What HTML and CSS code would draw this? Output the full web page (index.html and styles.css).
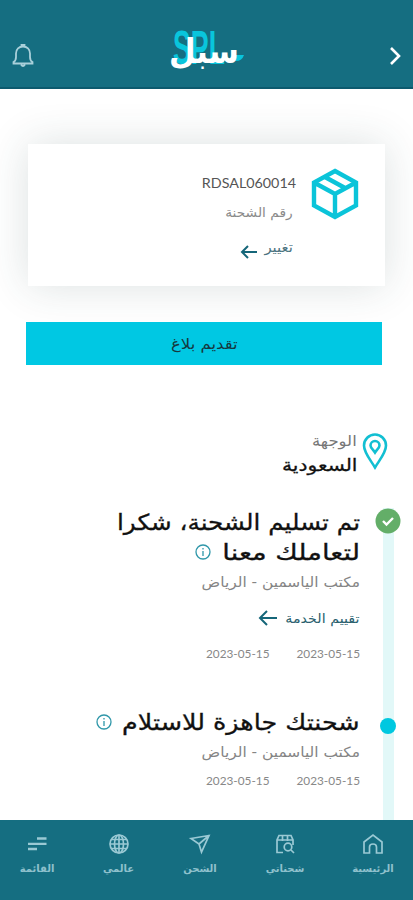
FILE: index.html
```html
<!DOCTYPE html>
<html lang="ar" dir="rtl">
<head>
    <meta charset="UTF-8">
    <meta name="viewport" content="width=device-width, initial-scale=1.0">
    <title>سبل</title>
    <link rel="stylesheet" href="styles.css">
</head>
<body>

    <header class="header">
        <svg class="chevron" width="12" height="20" viewBox="0 0 12 20"><path d="M2 2l8 8-8 8"/></svg>
        <svg class="logo" width="80" height="54" viewBox="0 0 80 54">
            <text class="logo-en" x="1" y="42" textLength="52" lengthAdjust="spacingAndGlyphs">SPL</text>
            <path class="logo-tail" d="M56 39l5-6h11q-2 6-8 6z"/>
            <text class="logo-ar" x="67" y="41" textLength="70" lengthAdjust="spacingAndGlyphs">سبل</text>
        </svg>
        <svg class="bell" width="22" height="24" viewBox="0 0 22 24">
            <path d="M1.500 19.500h19v-1.500c-2-1-2.500-2.500-2.500-5V9.500c0-4.500-3-7-7-7s-7 2.500-7 7V13c0 2.500-.5 4-2.500 5zM9.500 2.500V1h3v1.500M9 20.500q2 3 4 0"/>
        </svg>
    </header>

    <main class="content">
        <section class="card">
            <svg class="box" width="48" height="52" viewBox="0 0 48 52">
                <path d="M24 3l21 11.500v23L24 49 3 37.500v-23zM3 14.500L24 26l21-11.500M24 26v23M13.500 8.700L34.500 20.200"/>
            </svg>
            <div class="card-info">
                <div class="number" dir="ltr">RDSAL060014</div>
                <div class="label"><span class="wide-s">رقم الشحنة</span></div>
                <div class="change">
                    <span class="wide-s">تغيير</span>
                    <svg width="18" height="14" viewBox="0 0 18 14"><path d="M17 7H2M8 1L2 7l6 6"/></svg>
                </div>
            </div>
        </section>

        <button class="report"><span>تقديم بلاغ</span></button>

        <section class="destination">
            <svg width="26" height="38" viewBox="0 0 26 38">
                <path d="M13 35.500C9 28.500 2 21 2 13.500a11 11 0 0 1 22 0C24 21 17 28.500 13 35.500zM13 20.500c-1.500-2.500-4.500-4.500-4.500-7a4.500 4.500 0 0 1 9 0c0 2.500-3 4.500-4.500 7z"/>
            </svg>
            <div>
                <div class="dest-label"><span class="wide-m">الوجهة</span></div>
                <div class="dest-name"><span class="wide-l">السعودية</span></div>
            </div>
        </section>

        <section class="timeline">
            <div class="step step-done">
                <div class="rail">
                    <svg class="check" width="26" height="26" viewBox="0 0 26 26"><circle cx="13" cy="13" r="12.500"/><path d="M8 13l3.500 3.500L18 10"/></svg>
                </div>
                <div class="step-body">
                    <h2><span class="t1">تم تسليم الشحنة، شكرا</span><br><span class="t2">لتعاملك معنا</span>
                        <svg class="info" width="16" height="16" viewBox="0 0 16 16"><circle cx="8" cy="8" r="7"/><path d="M8 7v5M8 4v1.500"/></svg></h2>
                    <p class="place"><span class="wide-m">مكتب الياسمين - الرياض</span></p>
                    <div class="rate">
                        <span class="wide-m">تقييم الخدمة</span>
                        <svg width="20" height="16" viewBox="0 0 20 16"><path d="M19 8H2M9 1L2 8l7 7"/></svg>
                    </div>
                    <div class="dates"><span>2023-05-15</span><span>2023-05-15</span></div>
                </div>
            </div>
            <div class="step step-ready">
                <div class="rail"><i class="dot"></i></div>
                <div class="step-body">
                    <h2><span class="t3">شحنتك جاهزة للاستلام</span>
                        <svg class="info" width="16" height="16" viewBox="0 0 16 16"><circle cx="8" cy="8" r="7"/><path d="M8 7v5M8 4v1.500"/></svg></h2>
                    <p class="place"><span class="wide-m">مكتب الياسمين - الرياض</span></p>
                    <div class="dates"><span>2023-05-15</span><span>2023-05-15</span></div>
                </div>
            </div>
        </section>
    </main>

    <nav class="nav">
        <a class="nav-item">
            <svg width="22" height="22" viewBox="0 0 22 22"><path d="M2 20V9l9-7 9 7v11h-5.500v-6q0-3-3.500-3t-3.500 3v6z"/></svg>
            <span>الرئيسية</span>
        </a>
        <a class="nav-item">
            <svg width="22" height="22" viewBox="0 0 22 22"><path d="M9 19.500H3V7l2-4.500h12L19 7v5M3 7h16M8.500 2.500V8M13.500 2.500V8M17 17l3 3"/><circle cx="14" cy="14" r="3.800"/></svg>
            <span>شحناتي</span>
        </a>
        <a class="nav-item">
            <svg width="22" height="22" viewBox="0 0 22 22"><path d="M2 5.500l18-3L12.500 19l-2.500-8zM10 11l10-8.500"/></svg>
            <span>الشحن</span>
        </a>
        <a class="nav-item">
            <svg width="22" height="22" viewBox="0 0 22 22"><circle cx="11" cy="11" r="9"/><ellipse cx="11" cy="11" rx="4.500" ry="9"/><path d="M11 2v18M2 11h18M3.500 6.500h15M3.500 15.500h15"/></svg>
            <span>عالمي</span>
        </a>
        <a class="nav-item nav-menu">
            <svg width="22" height="22" viewBox="0 0 22 22"><path d="M11 5.500h9.500M2 10.800h18.500M2 16h9"/></svg>
            <span>القائمة</span>
        </a>
    </nav>

</body>
</html>
```

FILE: styles.css
```css
* {
    box-sizing: border-box;
}

body {
    margin: 0;
    height: 900px;
    overflow: hidden;
    display: flex;
    flex-direction: column;
    font-family: "DejaVu Sans", sans-serif;
    background-color: #fff;
    color: #111;
}

svg {
    display: block;
    flex: none;
    fill: none;
    overflow: visible;
}

span {
    display: inline-block;
    white-space: nowrap;
    transform-origin: right center;
}

/* widened Arabic lettering */
.wide-s {
    transform: scaleX(1.06);
}

.wide-m {
    transform: scaleX(1.1);
}

.wide-l {
    transform: scaleX(1.19);
}

.header {
    height: 89px;
    flex: none;
    display: flex;
    justify-content: space-between;
    align-items: flex-start;
    padding: 22px 12px 0;
    background-color: #156e81;
    border-bottom: 2px solid #0c5a6e;
}

.chevron {
    margin-top: 24px;
    stroke: #fff;
    stroke-width: 2.6;
}

.bell {
    margin-top: 22px;
    stroke: #a9d0da;
    stroke-width: 1.8;
}

.logo-en {
    font: bold 49px "Liberation Sans", sans-serif;
    fill: #09c5dc;
    direction: ltr;
}

.logo-ar {
    font: bold 34px "DejaVu Sans", sans-serif;
    fill: #fff;
    direction: rtl;
}

.logo-tail {
    fill: #09c5dc;
}

.content {
    flex: 1;
    min-height: 0;
    overflow: hidden;
    padding: 55px 28px 0;
}

.card {
    height: 142px;
    display: flex;
    gap: 15px;
    padding: 24px 26px 0;
    background-color: #fff;
    box-shadow: 0 0 40px rgba(40, 70, 70, 0.16);
}

.box {
    stroke: #0bc4d9;
    stroke-width: 4.4;
}

.number {
    height: 30px;
    line-height: 30px;
    font-family: Lato, sans-serif;
    font-size: 14.3px;
    color: #555;
}

.label {
    height: 30px;
    line-height: 30px;
    padding-right: 3px;
    font-size: 13px;
    color: #8a8a8a;
}

.change {
    display: flex;
    gap: 8px;
    margin-top: 8px;
    padding-right: 3px;
    font-size: 14px;
    line-height: 22px;
    color: #4d7480;
}

.change svg {
    margin-top: 9px;
}

.change svg,
.rate svg {
    stroke: #156679;
    stroke-width: 2;
}

.report {
    display: block;
    width: 356px;
    height: 43px;
    margin: 36px 3px 0 -2px;
    padding: 0;
    border: 0;
    background-color: #00c8e3;
    font: 15px "DejaVu Sans", sans-serif;
    color: #16383e;
}

.report span {
    transform: scaleX(1.1);
    transform-origin: center;
}

.destination {
    display: flex;
    gap: 5px;
    margin: 67px -3px 0 0;
}

.destination svg {
    stroke: #12bfd2;
    stroke-width: 2.6;
}

.dest-label {
    height: 18px;
    line-height: 18px;
    font-size: 15px;
    color: #777;
}

.dest-name {
    height: 30px;
    line-height: 30px;
    font-size: 17px;
    color: #111;
    -webkit-text-stroke: 0.3px #111;
}

.timeline {
    margin: 28px -16px 0 0;
}

.step {
    display: flex;
    gap: 15px;
}

.rail {
    width: 26px;
    flex: none;
    display: flex;
    justify-content: center;
    align-items: flex-start;
    background: linear-gradient(#e2f8f8, #e2f8f8) center / 11px 100% no-repeat;
}

.check circle {
    fill: #63ae68;
}

.check path {
    stroke: #fff;
    stroke-width: 2.4;
}

.dot {
    width: 16px;
    height: 16px;
    margin-top: 10px;
    border-radius: 50%;
    background-color: #00c8e0;
}

.step-done {
    height: 200px;
}

.step-ready {
    height: 130px;
}

h2 {
    margin: 0;
    height: 60px;
    font-size: 22px;
    line-height: 30px;
    font-weight: normal;
    white-space: nowrap;
    -webkit-text-stroke: 0.3px #111;
}

.step-ready h2 {
    height: 30px;
}

.t1 {
    transform: scaleX(1.12);
}

.t2 {
    margin-left: 27px;
    transform: scaleX(1.24);
}

.t3 {
    margin-left: 31px;
    transform: scaleX(1.155);
}

.info {
    display: inline-block;
    margin-right: 4px;
    vertical-align: 0;
    stroke: #2f97a9;
    stroke-width: 1.3;
}

.place {
    margin: 0;
    height: 30px;
    line-height: 28px;
    font-size: 14px;
    color: #858585;
}

.rate {
    display: flex;
    gap: 14px;
    align-items: center;
    height: 40px;
    font-size: 13px;
    color: #2a5f6e;
}

.dates {
    display: flex;
    gap: 27px;
    line-height: 31px;
    font-family: Lato, sans-serif;
    font-size: 11.8px;
    color: #888;
}

.step-ready .dates {
    line-height: 26px;
}

.nav {
    height: 80px;
    flex: none;
    display: grid;
    grid-template-columns: 80px 96px 74px 89px 74px;
    padding: 13px 0 0;
    background-color: #156e81;
}

.nav-item {
    display: flex;
    flex-direction: column;
    align-items: center;
    font-size: 10px;
    font-weight: bold;
    line-height: 27px;
    color: #8fc1cd;
}

.nav-item svg {
    stroke: #9ac9d4;
    stroke-width: 1.7;
}

.nav-menu svg {
    stroke-width: 2.3;
}
```
